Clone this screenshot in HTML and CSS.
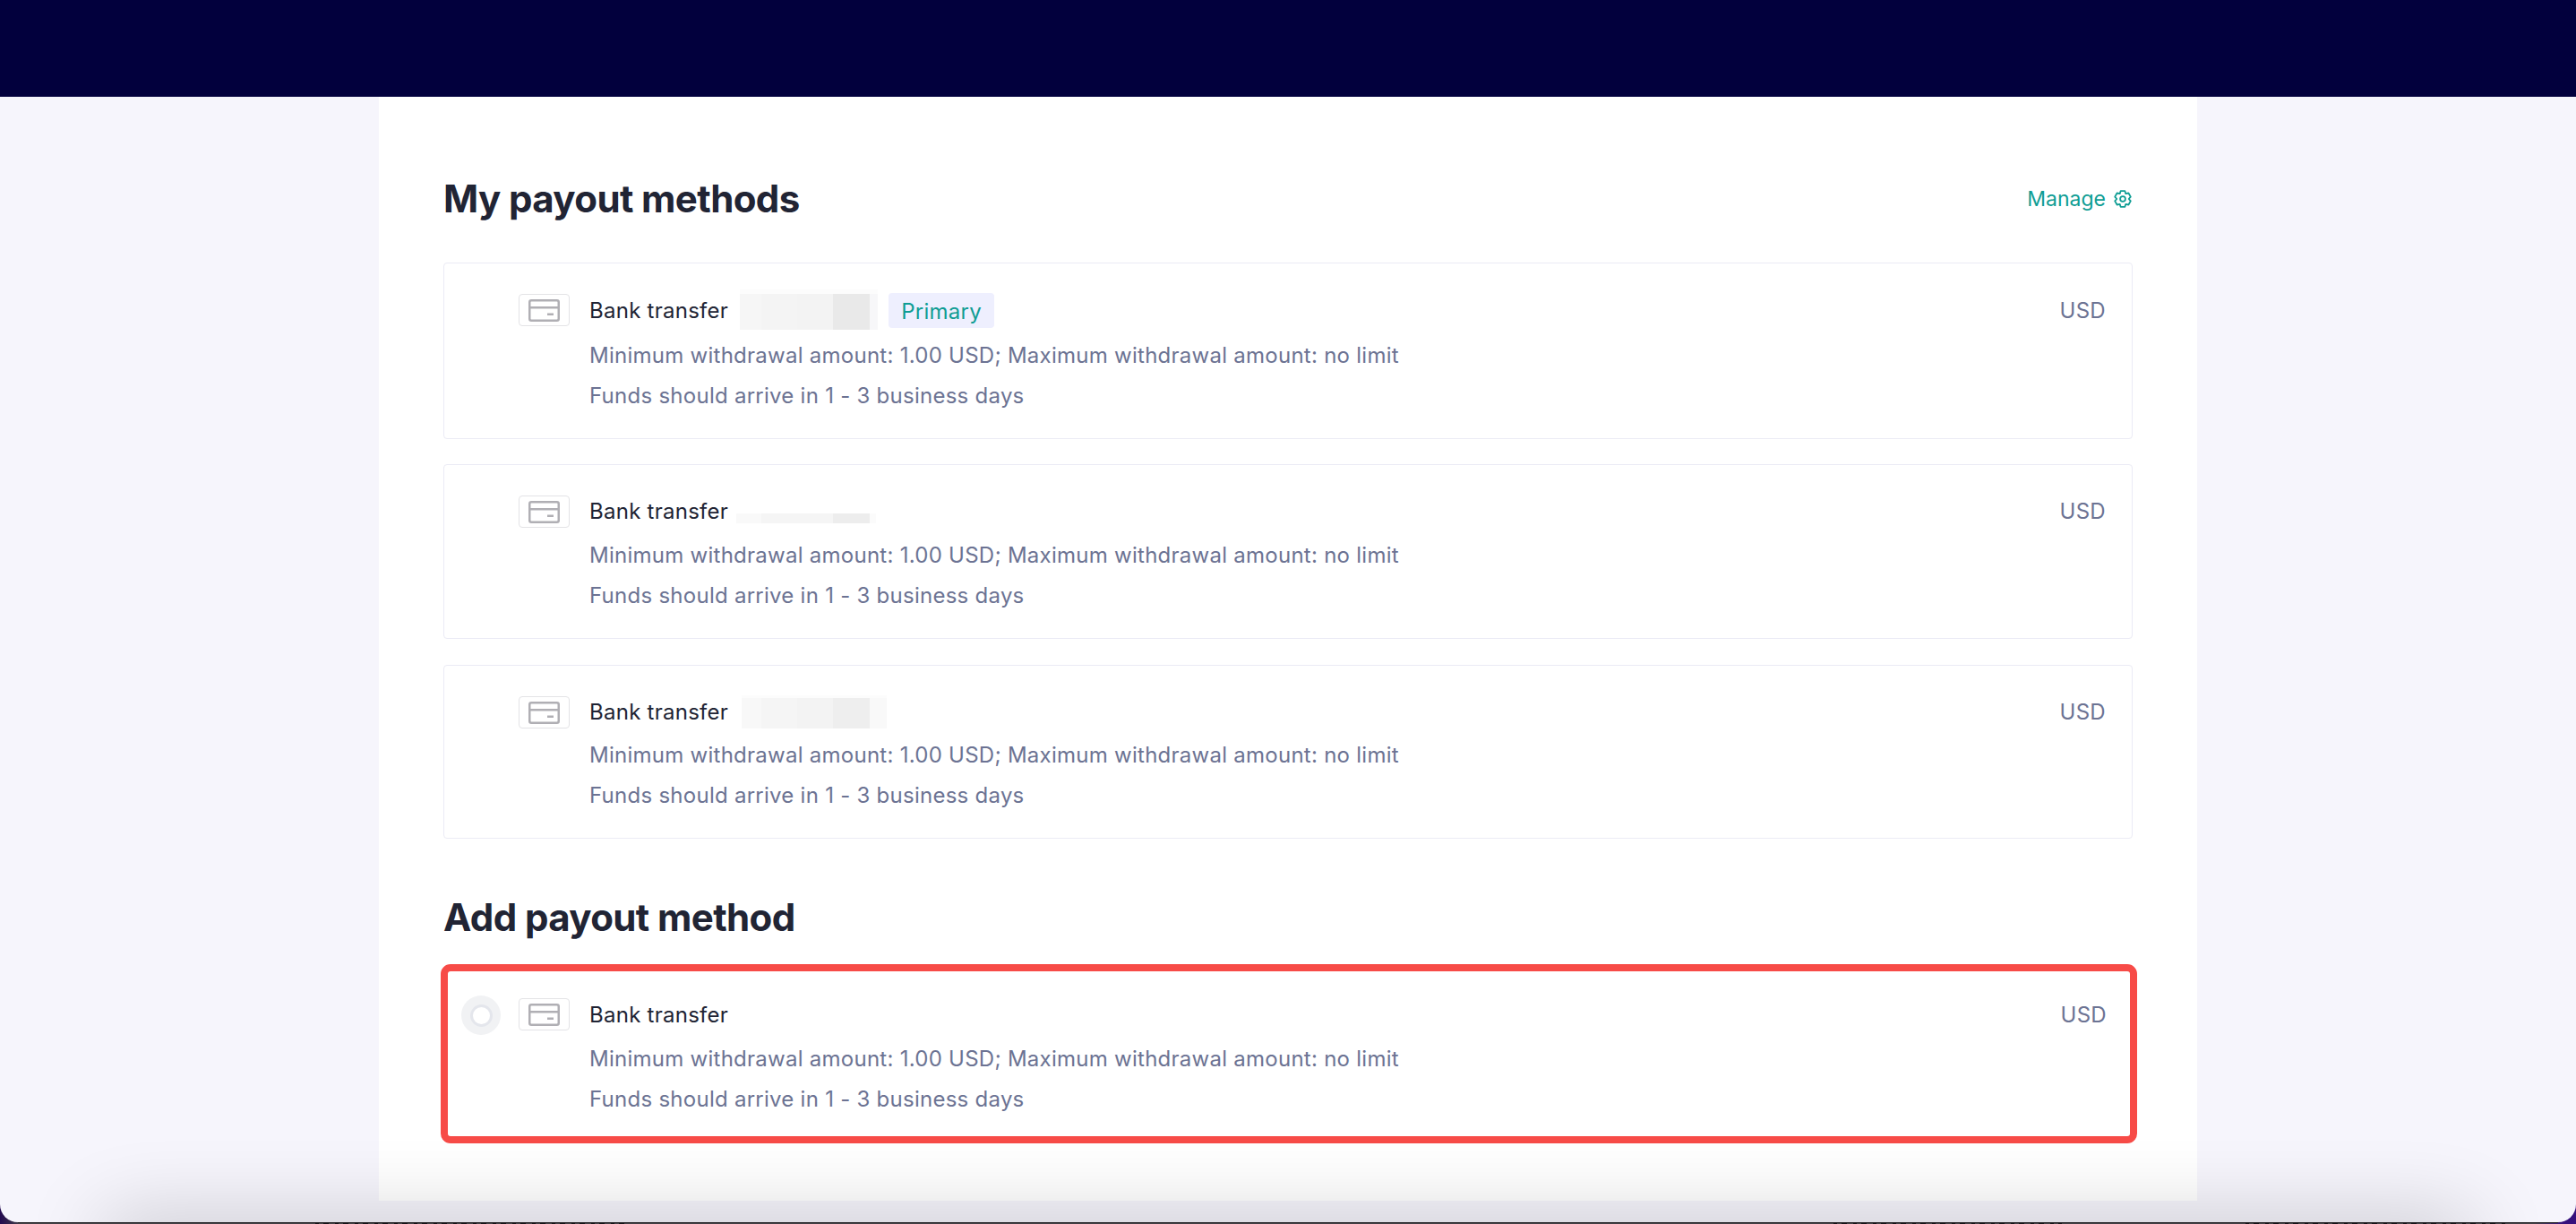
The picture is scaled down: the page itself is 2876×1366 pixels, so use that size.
FILE: index.html
```html
<!DOCTYPE html>
<html lang="en">
<head>
    <meta charset="UTF-8">
    <meta name="viewport" content="width=device-width, initial-scale=1.0">
    <title>Payout methods</title>
    <link rel="stylesheet" href="styles.css">
</head>
<body>

    <!-- Icons -->
    <svg width="0" height="0" class="sprite">
        <symbol id="card" viewBox="0 0 35 25">
            <rect x="1.25" y="1.25" width="32.5" height="22.5" rx="2" fill="none" stroke="#b0afb4" stroke-width="2.5"/>
            <path d="M1.25 9.2h32.5M21 16.8h7" fill="none" stroke="#b0afb4" stroke-width="2.5"/>
        </symbol>
    </svg>

    <div class="window">
        <header class="topbar"></header>

        <main class="sheet">
            <div class="section-head">
                <h2>My payout methods</h2>
                <a class="manage" href="#">Manage
                    <svg class="gear" viewBox="0 0 20 20">
                        <path d="M7.6 1.2L12.4 1.2L13.3 4.2L16.4 3.5L18.8 7.6L16.7 10L18.8 12.4L16.4 16.5L13.3 15.8L12.4 18.8L7.6 18.8L6.7 15.8L3.6 16.5L1.2 12.4L3.3 10L1.2 7.6L3.6 3.5L6.7 4.2Z"/>
                        <circle cx="10" cy="10" r="2.9"/>
                    </svg>
                </a>
            </div>

            <div class="method method-primary">
                <div class="thumb"><svg><use href="#card"/></svg></div>
                <div class="info">
                    <div class="name">Bank transfer <span class="mask mask-1"></span><span class="badge">Primary</span></div>
                    <p>Minimum withdrawal amount: 1.00 USD; Maximum withdrawal amount: no limit</p>
                    <p>Funds should arrive in 1 - 3 business days</p>
                </div>
                <span class="currency">USD</span>
            </div>

            <div class="method">
                <div class="thumb"><svg><use href="#card"/></svg></div>
                <div class="info">
                    <div class="name">Bank transfer <span class="mask mask-2"></span></div>
                    <p>Minimum withdrawal amount: 1.00 USD; Maximum withdrawal amount: no limit</p>
                    <p>Funds should arrive in 1 - 3 business days</p>
                </div>
                <span class="currency">USD</span>
            </div>

            <div class="method">
                <div class="thumb"><svg><use href="#card"/></svg></div>
                <div class="info">
                    <div class="name">Bank transfer <span class="mask mask-3"></span></div>
                    <p>Minimum withdrawal amount: 1.00 USD; Maximum withdrawal amount: no limit</p>
                    <p>Funds should arrive in 1 - 3 business days</p>
                </div>
                <span class="currency">USD</span>
            </div>

            <h2 class="add-title">Add payout method</h2>

            <div class="method method-new">
                <span class="radio"></span>
                <div class="thumb"><svg><use href="#card"/></svg></div>
                <div class="info">
                    <div class="name">Bank transfer</div>
                    <p>Minimum withdrawal amount: 1.00 USD; Maximum withdrawal amount: no limit</p>
                    <p>Funds should arrive in 1 - 3 business days</p>
                </div>
                <span class="currency">USD</span>
            </div>
        </main>
        <div class="shade"></div>
    </div>

    <!-- Window behind -->
    <div class="behind">
        <span class="specks specks-1"></span>
        <span class="specks specks-2"></span>
        <span class="specks specks-3"></span>
    </div>

</body>
</html>
```
FILE: styles.css
```css
* {
    box-sizing: border-box;
}

body {
    margin: 0;
    height: 1366px;
    overflow: hidden;
    background: linear-gradient(90deg, #230a50 0, #444246 24px, #444246 2830px, #35107c 2862px);
    font-family: Inter, "Liberation Sans", sans-serif;
    color: #212434;
}

.sprite {
    display: block;
}

.window {
    position: relative;
    height: 1364px;
    overflow: hidden;
    background: #f6f5fc;
    border-radius: 0 0 20px 20px;
}

.topbar {
    height: 108px;
    background: #02003d;
}

.sheet {
    width: 2030px;
    height: 1232px;
    margin: 0 auto;
    padding: 82px 72px 0;
    background: #fff;
}

h2 {
    margin: 0;
    font-size: 42px;
    line-height: 64px;
    font-weight: 700;
    letter-spacing: -0.6px;
}

.section-head {
    display: flex;
    justify-content: space-between;
    align-items: center;
    margin-bottom: 39px;
}

.manage {
    display: flex;
    align-items: center;
    gap: 9px;
    margin: -1px 1px 0 0;
    font-size: 23px;
    line-height: 30px;
    color: #0f9d94;
    text-decoration: none;
}

.gear {
    width: 20px;
    height: 20px;
    fill: none;
    stroke: #0f9d94;
    stroke-width: 1.8;
    stroke-linejoin: round;
}

/* Payout method card */
.method {
    display: flex;
    align-items: flex-start;
    height: 194.5px;
    margin-bottom: 29px;
    padding: 34px 29px 0 83px;
    border: 1px solid #ebebf5;
    border-radius: 4px;
}

.method-primary {
    height: 197px;
    margin-bottom: 28px;
}

.thumb {
    display: flex;
    justify-content: center;
    width: 57px;
    height: 36px;
    margin-right: 22px;
    padding-top: 5px;
    border: 1px solid #e3e3e6;
    border-radius: 4px;
}

.thumb svg {
    width: 35px;
    height: 25px;
}

.info {
    flex: 1;
    font-size: 24px;
    letter-spacing: 0.26px;
}

.name {
    display: flex;
    height: 36px;
    line-height: 36px;
    margin-bottom: 7.5px;
}

.method-primary .name {
    line-height: 38px;
    margin-bottom: 10px;
}

.info p {
    margin: 0;
    line-height: 45px;
    height: 45px;
    color: #6c7393;
}

.currency {
    font-size: 24px;
    line-height: 36px;
    letter-spacing: 0.3px;
    color: #6c7393;
}

.method-primary .currency,
.method-new .currency {
    line-height: 38px;
}

.badge {
    width: 118px;
    height: 39px;
    margin: -1px 0 0 12px;
    border-radius: 4px;
    background: #eeeffe;
    color: #0f9d94;
    line-height: 41px;
    text-align: center;
}

/* Hidden account numbers */
.mask {
    background: linear-gradient(90deg, #f6f6f6 24px, #f4f4f4 24px 64px, #f3f3f3 64px 104px, #e9e9e9 104px 145px, #f7f7f9 145px);
}

.mask-1 {
    width: 154px;
    height: 45px;
    margin: -5px 0 0 13px;
    border-top: 5px solid #fcfcfc;
}

.mask-2 {
    width: 156px;
    height: 11px;
    margin: 20px 0 0 9px;
    background: linear-gradient(90deg, #f9f9f9 28px, #f5f5f5 28px 108px, #ededed 108px 149px, #fbfbfb 149px);
}

.mask-3 {
    width: 162px;
    height: 37px;
    margin: -1px 0 0 15px;
    border-top: 3px solid #fcfcfc;
    background: linear-gradient(90deg, #f8f8f8 22px, #f5f5f5 22px 62px, #f3f3f3 62px 102px, #eee 102px 143px, #f9f9f9 143px);
}

.add-title {
    margin: 56px 0 20px;
}

/* Highlighted card */
.method-new {
    width: 1894px;
    height: 200px;
    margin-left: -3px;
    padding: 30px 26px 0 15px;
    border: 8px solid #f74b47;
    border-radius: 11px;
}

.method-new .name {
    line-height: 38px;
    margin-bottom: 9px;
}

.radio {
    display: flex;
    align-items: center;
    justify-content: center;
    width: 44px;
    height: 44px;
    margin: -3px 20px 0 0;
    border-radius: 50%;
    background: #f1f2f4;
}

.radio::before {
    content: '';
    width: 19px;
    height: 19px;
    border: 3px solid #e4e6ec;
    border-radius: 50%;
    background: #fff;
}

/* Shadow along the bottom of the window */
.shade {
    position: absolute;
    left: 120px;
    right: 120px;
    bottom: -60px;
    height: 60px;
    box-shadow: 0 0 90px 4px rgba(0, 0, 0, 0.2);
}

/* Edge of the window behind */
.behind {
    display: flex;
    height: 2px;
    margin: 0 20px;
    padding-left: 332px;
    border-top: 1px solid #232125;
}

.specks {
    height: 1px;
    background: repeating-linear-gradient(90deg, #151417 0 4px, transparent 4px 9px, #151417 9px 15px, transparent 15px 22px);
}

.specks-1 {
    width: 345px;
}

.specks-2 {
    width: 255px;
    margin-left: 1350px;
}

.specks-3 {
    width: 290px;
    margin-left: 205px;
}
```
